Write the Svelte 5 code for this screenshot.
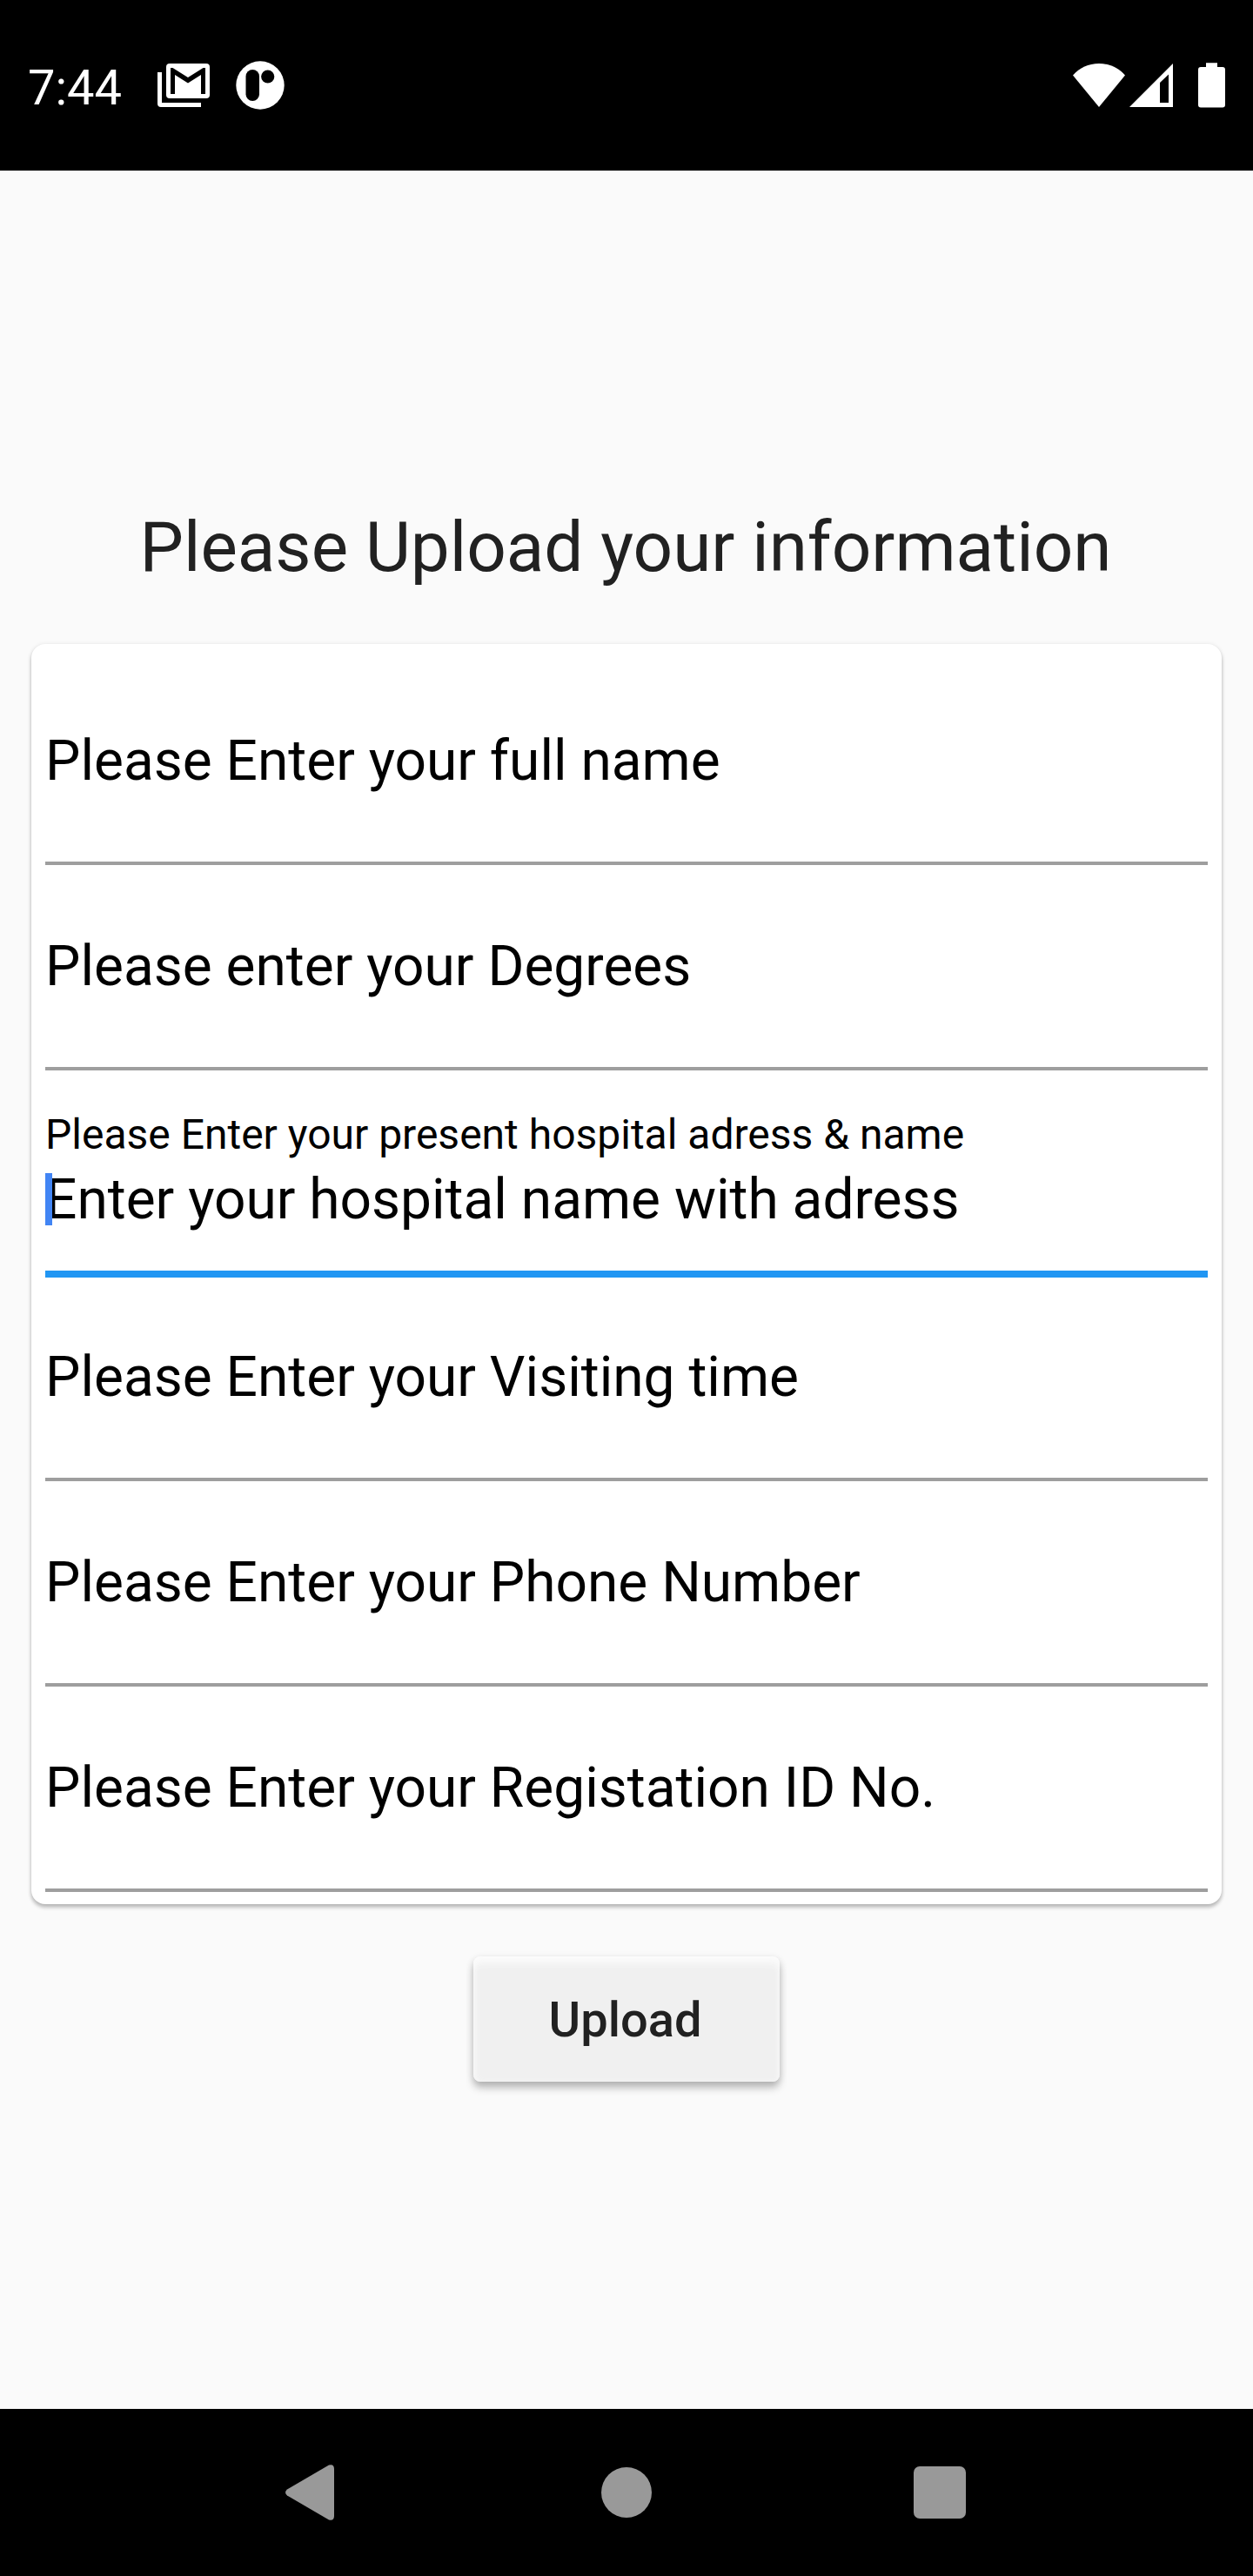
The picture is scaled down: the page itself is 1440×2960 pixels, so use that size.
<script>
  const fields = [
    { label: 'Please Enter your full name' },
    { label: 'Please enter your Degrees' },
    {
      label: 'Please Enter your present hospital adress & name',
      hint: 'Enter your hospital name with adress',
      focused: true
    },
    { label: 'Please Enter your Visiting time' },
    { label: 'Please Enter your Phone Number' },
    { label: 'Please Enter your Registation ID No.' }
  ];
</script>

<div class="screen">
  <header class="status">
    <span class="time">7:44</span>
    <svg class="mail" width="60" height="50" viewBox="0 0 60 50" aria-hidden="true">
      <path d="M0 10h5v35h45v5H4a4 4 0 0 1-4-4z" fill="#fff" />
      <rect x="10" y="0" width="50" height="40" rx="4" fill="#fff" />
      <path d="M15 5h2.500L35 16 52.500 5H55v30h-5V13L35 22.500 20 13v22h-5z" fill="#000" />
    </svg>
    <svg class="app" width="56" height="56" viewBox="0 0 56 56" aria-hidden="true">
      <circle cx="28" cy="28" r="27.700" fill="#fff" />
      <rect x="11.500" y="10" width="15.500" height="36" rx="7.750" fill="#000" />
      <circle cx="36.700" cy="18" r="7.600" fill="#000" />
    </svg>
    <span class="spacer"></span>
    <svg class="wifi" width="60" height="50" viewBox="0 0 60 50" aria-hidden="true">
      <path d="M30 50L0 13.500C7.500 5 18 0 30 0s22.500 5 30 13.500z" fill="#fff" />
    </svg>
    <svg class="signal" width="50" height="50" viewBox="0 0 50 50" aria-hidden="true">
      <path d="M0 50L50 0v50zM35 22v23h10V12.500z" fill="#fff" fill-rule="evenodd" />
    </svg>
    <svg class="battery" width="31" height="52" viewBox="0 0 31 52" aria-hidden="true">
      <path d="M9 0.300h13V5h6a3 3 0 0 1 3 3v40.600a3 3 0 0 1-3 3H3a3 3 0 0 1-3-3V8a3 3 0 0 1 3-3h6z" fill="#fff" />
    </svg>
  </header>

  <main>
    <h1>Please Upload your information</h1>
    <section class="card">
      {#each fields as field}
        <div class="field" class:focused={field.focused}>
          <span class="label">{field.label}</span>
          {#if field.hint}
            <span class="hint">{field.hint}<i class="caret"></i></span>
          {/if}
        </div>
      {/each}
    </section>
    <button type="button">Upload</button>
  </main>

  <nav>
    <svg width="64" height="64" viewBox="0 0 64 64" aria-label="Back">
      <path d="M6 28.500L54 0.600Q60 -1 60 5V59Q60 65 54 63.400L6 35.500Q2 32 6 28.500z" fill="#999" />
    </svg>
    <svg width="64" height="64" viewBox="0 0 64 64" aria-label="Home">
      <circle cx="32" cy="32" r="29" fill="#999" />
    </svg>
    <svg width="64" height="64" viewBox="0 0 64 64" aria-label="Recents">
      <rect x="2" y="2" width="60" height="60" rx="7" fill="#999" />
    </svg>
  </nav>
</div>

<style>
  :global(body) {
    margin: 0;
    background: #fafafa;
  }
  .screen {
    width: 1440px;
    height: 2960px;
    display: flex;
    flex-direction: column;
    background: #fafafa;
    font-family: Roboto, sans-serif;
    overflow: hidden;
  }
  svg {
    display: block;
    flex: none;
  }
  .status {
    height: 196px;
    box-sizing: border-box;
    padding: 0 32px;
    display: flex;
    align-items: center;
    background: #000;
    color: #fff;
  }
  .time {
    width: 149px;
    padding-top: 6px;
    font-size: 56px;
    line-height: 66px;
    white-space: nowrap;
  }
  .app {
    margin-left: 30px;
  }
  .spacer {
    flex: 1;
  }
  .signal {
    margin-left: 5px;
  }
  .battery {
    margin-left: 29px;
  }
  main {
    flex: 1;
    box-sizing: border-box;
    padding: 386px 36px 0;
    display: flex;
    flex-direction: column;
    align-items: center;
  }
  h1 {
    margin: 0;
    padding-right: 2px;
    font-size: 80px;
    font-weight: 400;
    line-height: 94px;
    color: #212121;
    white-space: nowrap;
  }
  .card {
    align-self: stretch;
    margin-top: 64px;
    padding: 18px 16px 14px;
    background: #fff;
    border-radius: 16px;
    box-shadow:
      0 4px 4px rgba(0, 0, 0, 0.2),
      0 1px 5px rgba(0, 0, 0, 0.14);
  }
  .field {
    height: 236px;
    box-sizing: border-box;
    padding-top: 2px;
    border-bottom: 4px solid #9e9e9e;
    display: flex;
    flex-direction: column;
    justify-content: center;
    font-size: 64px;
    line-height: 76px;
    color: #000;
    white-space: nowrap;
  }
  .field.focused {
    height: 238px;
    margin-bottom: -2px;
    border-bottom: 8px solid #2196f3;
    justify-content: flex-start;
    padding-top: 46px;
  }
  .focused .label {
    font-size: 48px;
    line-height: 56px;
  }
  .hint {
    position: relative;
    margin-top: 9px;
  }
  .caret {
    position: absolute;
    left: 0;
    top: 7px;
    width: 8px;
    height: 60px;
    background: #4285f4;
  }
  button {
    width: 352px;
    height: 144px;
    margin-top: 60px;
    padding: 2px 3px 0 0;
    border: 0;
    border-radius: 8px;
    background: #f0f0f0;
    box-shadow:
      0 7px 10px rgba(0, 0, 0, 0.24),
      0 2px 8px rgba(0, 0, 0, 0.1),
      inset 0 10px 8px -2px #fbfbfb,
      inset 4px 0 6px -1px #f6f6f6,
      inset -3px 0 4px -1px #f4f4f4;
    color: #212121;
    font: 500 56px/66px Roboto, sans-serif;
  }
  nav {
    height: 192px;
    box-sizing: border-box;
    padding-left: 324px;
    display: flex;
    gap: 296px;
    align-items: center;
    background: #000;
  }
  nav svg:nth-child(2) {
    margin-left: 4px;
  }
</style>
